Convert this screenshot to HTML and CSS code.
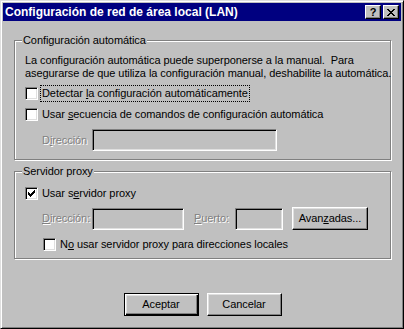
FILE: index.html
```
<!DOCTYPE html>
<html lang="es">
<head>
<meta charset="utf-8">
<link rel="stylesheet" href="styles.css">
</head>
<body>
<div class="window">
  <div class="titlebar">
    <span class="title">Configuración de red de área local (LAN)</span>
    <div class="tbtns">
      <span class="tbtn help">?</span>
      <span class="tbtn close">
        <svg width="8" height="7" viewBox="0 0 8 7" shape-rendering="crispEdges">
          <rect x="0" y="0" width="2" height="1"/><rect x="6" y="0" width="2" height="1"/>
          <rect x="1" y="1" width="2" height="1"/><rect x="5" y="1" width="2" height="1"/>
          <rect x="2" y="2" width="4" height="1"/>
          <rect x="3" y="3" width="2" height="1"/>
          <rect x="2" y="4" width="4" height="1"/>
          <rect x="1" y="5" width="2" height="1"/><rect x="5" y="5" width="2" height="1"/>
          <rect x="0" y="6" width="2" height="1"/><rect x="6" y="6" width="2" height="1"/>
        </svg>
      </span>
    </div>
  </div>
  <div class="body">
    <fieldset class="group g1">
      <legend>Configuración automática</legend>
      <div class="gin g1in">
        <p class="desc">La configuración automática puede superponerse a la manual.&nbsp; Para<br>asegurarse de que utiliza la configuración manual, deshabilite la automática.</p>
        <div class="row r1"><span class="cb"></span><span class="lbl focus">Detectar <u>l</u>a configuración automáticamente</span></div>
        <div class="row r2"><span class="cb"></span><span class="lbl">Usar <u>s</u>ecuencia de comandos de configuración automática</span></div>
        <div class="frow f1"><span class="dis flab">D<u>i</u>rección</span><span class="inp w185"></span></div>
      </div>
    </fieldset>
    <fieldset class="group g2">
      <legend>Servidor proxy</legend>
      <div class="gin g2in">
        <div class="row"><span class="cb">
          <svg width="7" height="7" viewBox="0 0 7 7" shape-rendering="crispEdges">
            <rect x="6" y="0" width="1" height="1"/>
            <rect x="5" y="1" width="2" height="1"/>
            <rect x="0" y="2" width="1" height="1"/><rect x="4" y="2" width="3" height="1"/>
            <rect x="0" y="3" width="2" height="1"/><rect x="3" y="3" width="3" height="1"/>
            <rect x="0" y="4" width="5" height="1"/>
            <rect x="1" y="5" width="3" height="1"/>
            <rect x="2" y="6" width="1" height="1"/>
          </svg></span><span class="lbl">Usar s<u>e</u>rvidor proxy</span></div>
        <div class="frow f2">
          <span class="dis flab"><u>D</u>irección:</span><span class="inp w92"></span>
          <span class="dis plab"><u>P</u>uerto:</span><span class="inp w48"></span>
          <span class="btn adv">Avan<u>z</u>adas...</span>
        </div>
        <div class="row r3"><span class="cb"></span><span class="lbl">N<u>o</u> usar servidor proxy para direcciones locales</span></div>
      </div>
    </fieldset>
    <div class="actions">
      <span class="btn default">Aceptar</span>
      <span class="btn">Cancelar</span>
    </div>
  </div>
</div>
</body>
</html>
```
FILE: styles.css
```
* { box-sizing: border-box; }
html, body { margin: 0; padding: 0; background: #c0c0c0; }
body { font-family: "Liberation Sans", Arial, sans-serif; font-size: 11px; color: #000; letter-spacing: -0.08px; }

.window {
  width: 404px; height: 329px;
  background: #c0c0c0;
  border: 1px solid; border-color: #dfdfdf #000 #000 #dfdfdf;
  box-shadow: inset 1px 1px #fff, inset -1px -1px #808080;
  padding: 2px;
  display: flex; flex-direction: column;
}
.titlebar {
  height: 18px; background: #000080; color: #fff;
  display: flex; align-items: center; justify-content: space-between;
  padding-left: 2px; padding-right: 2px;
}
.title { font-weight: bold; font-size: 12px; line-height: 14px; letter-spacing: 0; }
.tbtns { display: flex; gap: 2px; }
.tbtn {
  width: 16px; height: 14px; background: #c0c0c0; color: #000;
  border: 1px solid; border-color: #fff #000 #000 #fff;
  box-shadow: inset -1px -1px #808080;
  display: flex; align-items: center; justify-content: center;
}
.help { font-weight: bold; font-size: 11px; line-height: 12px; }
.close svg { fill: #000; display: block; }

.body { padding: 13px 10px 0 11px; display: flex; flex-direction: column; }

.group {
  margin: 0; padding: 0; min-width: 0;
  border: 1px solid #808080;
  box-shadow: 1px 1px 0 #fff, inset 1px 1px 0 #fff;
}
.group legend {
  margin-left: 7px; padding: 0 1px; line-height: 13px; background: #c0c0c0;
}
.g2 { margin-top: 5px; }
.gin { padding-left: 10px; }
.g1in { padding-top: 7px; padding-bottom: 8px; }
.g2in { padding-top: 9px; padding-bottom: 7px; }

.desc { margin: 0; line-height: 13px; white-space: nowrap; }

.row { display: flex; align-items: center; height: 13px; }
.r1 { margin-top: 7px; }
.r2 { margin-top: 8px; }
.r3 { margin-top: 8px; padding-left: 18px; }
.lbl { margin-left: 4px; line-height: 13px; white-space: nowrap; }
.focus { outline: 1px dotted #000; outline-offset: 1px; }

.cb {
  width: 13px; height: 13px; background: #fff;
  border: 1px solid; border-color: #808080 #fff #fff #808080;
  box-shadow: inset 1px 1px #000, inset -1px -1px #dfdfdf;
  display: flex; align-items: flex-start; justify-content: flex-start;
  padding: 2px 0 0 2px;
}
.cb svg { fill: #000; display: block; }

.frow { display: flex; align-items: flex-start; padding-left: 17px; }
.f1 { margin-top: 8px; align-items: center; }
.f2 { margin-top: 7px; align-items: center; }
.flab { width: 50px; line-height: 13px; white-space: nowrap; }
.plab { margin-left: 10px; width: 41px; line-height: 13px; }
.dis { color: #808080; text-shadow: 1px 1px 0 #fff; }

.inp {
  height: 22px; background: #c0c0c0;
  border: 1px solid; border-color: #808080 #fff #fff #808080;
  box-shadow: inset 1px 1px #000, inset -1px -1px #dfdfdf;
}
.w185 { width: 185px; }
.w92 { width: 92px; }
.w48 { width: 48px; }

.btn {
  width: 75px; height: 23px; background: #c0c0c0;
  border: 1px solid; border-color: #fff #000 #000 #fff;
  box-shadow: inset -1px -1px #808080, inset 1px 1px #dfdfdf;
  display: flex; align-items: center; justify-content: center;
  line-height: 13px;
}
.adv { margin-left: 9px; width: 76px; }
.btn.default {
  border: 1px solid #000;
  box-shadow: inset 1px 1px #fff, inset -1px -1px #000, inset -2px -2px #808080, inset 2px 2px #dfdfdf;
}
.actions { display: flex; justify-content: center; gap: 8px; margin-top: 34px; }
```
